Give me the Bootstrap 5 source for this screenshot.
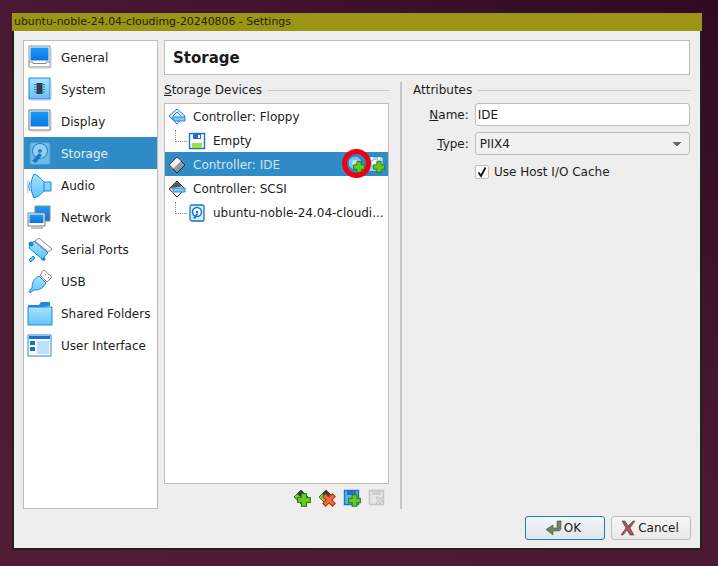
<!DOCTYPE html>
<html lang="en">
<head>
  <meta charset="UTF-8" />
  <meta name="viewport" content="width=device-width, initial-scale=1.0" />
  <title>Settings</title>
  <link href="https://cdn.jsdelivr.net/npm/bootstrap@5.3.3/dist/css/bootstrap.min.css" rel="stylesheet" />
  <style>
    html, body { height: 566px; overflow: hidden; }
    body {
      font-family: "DejaVu Sans", sans-serif;
      font-size: 12px;
      color: #1c1c1c;
      background: linear-gradient(215deg, #2e0a22 0%, #4a1832 45%, #531c36 100%);
      padding: 13px 16px 16px 12px;
    }
    .vb-window {
      height: 537px;
      background: #eeeeee;
      border: solid #20201e;
      border-width: 0 2px 2px 2px;
    }
    .vb-title {
      height: 18px;
      margin: 0 -2px;
      padding-left: 2px;
      line-height: 18px;
      font-size: 10.9px;
      background: #9c9414;
      color: #22220a;
      white-space: nowrap;
    }
    .vb-body { padding: 9px 10px 9px 9px; }
    .vb-side {
      width: 135px;
      height: 469px;
      background: #fff;
      border: 1px solid #bdbdbd;
    }
    .side-item { height: 32px; padding: 1px 0 0 3px; gap: 8px; }
    .side-item svg { width: 26px; height: 26px; flex: none; }
    .side-item.on { background: #308cc6; color: #e4f0f8; }
    .vb-main { width: 526px; }
    .vb-head {
      height: 35px;
      padding: 1px 0 0 8px;
      background: #fff;
      border: 1px solid #bdbdbd;
      font-size: 15px;
      font-weight: 700;
    }
    .vb-split { width: 2px; height: 427px; margin: 7px 11px 0 11px; background: #c6c6c6; }
    .vb-col-tree { width: 225px; }
    .vb-legend { height: 14px; margin-top: 8px; gap: 6px; }
    .vb-legend::after { content: ""; flex: 1; height: 1px; background: #c8c8c8; }
    .vb-tree {
      height: 381px;
      margin-top: 6px;
      background: #fff;
      border: 1px solid #bdbdbd;
    }
    .tree-row { height: 24px; padding: 1px 0 0 3px; gap: 7px; white-space: nowrap; }
    .tree-row svg { width: 18px; height: 18px; flex: none; }
    .tree-row.on { background: #308cc6; color: #cfe3f1; }
    .tree-hook {
      width: 12px;
      height: 12px;
      margin: -10px -6px 0 7px;
      border-left: 1px dotted #888;
      border-bottom: 1px dotted #888;
      flex: none;
    }
    .tree-adds { gap: 2px; margin: -1px 3px 0 0; }
    .tree-adds svg { width: 18px; height: 18px; }
    .ring-wrap { position: relative; }
    .ring-mark {
      position: absolute;
      left: -5px;
      top: -6px;
      width: 29px;
      height: 29px;
      border: 5px solid #ee0010;
      border-radius: 50%;
    }
    .tree-tools { gap: 7px; height: 25px; margin-top: 1px; padding-right: 3px; }
    .tree-tools svg { width: 18px; height: 18px; }
    .vb-col-attr { width: 277px; }
    .vb-col-attr .vb-legend { margin-right: -1px; }
    .attr-fields { margin-top: 6px; }
    .attr-label { width: 56px; margin-right: 6px; text-align: right; }
    .attr-row { height: 23px; }
    .attr-row + .attr-row { margin-top: 6px; }
    .attr-input, .attr-select {
      width: 216px;
      height: 23px;
      padding: 0 2px;
      font-size: 12px;
      color: #1c1c1c;
      border: 1px solid #bdbdbd;
      border-radius: 3px;
      box-shadow: none;
    }
    .attr-select {
      padding-left: 4px;
      background-color: #f1f1f1;
      background-image: linear-gradient(45deg, transparent 50%, #666 50%), linear-gradient(-45deg, transparent 50%, #666 50%);
      background-position: right 12px top 9px, right 7px top 9px;
      background-size: 5px 4px;
      background-repeat: no-repeat;
    }
    .attr-check { margin: 9px 0 0 62px; gap: 5px; height: 15px; }
    .attr-box {
      width: 14px;
      height: 14px;
      background: #fff;
      border: 1px solid #bdbdbd;
      border-radius: 2px;
    }
    .attr-box svg { display: block; width: 12px; height: 12px; }
    .vb-foot { gap: 6px; padding: 6px 0 0 0; margin-right: -1px; }
    .vb-btn {
      width: 80px;
      height: 24px;
      padding: 0 3px 0 0;
      gap: 2px;
      font-size: 12px;
      color: #1c1c1c;
      background: linear-gradient(#f6f6f6, #e9e9e9);
      border: 1px solid #bcbcbc;
      border-radius: 3px;
    }
    .vb-btn.main { background: linear-gradient(#f2f6f9, #dfe6ea); border-color: #2b7aa8; }
    .vb-btn svg { width: 16px; height: 16px; }
  </style>
</head>
<body>
  <svg width="0" height="0" class="d-block position-absolute">
    <defs>
      <linearGradient id="gBlue" x1="0" y1="0" x2="0" y2="1"><stop offset="0" stop-color="#1b9bf5"/><stop offset="1" stop-color="#0a74e6"/></linearGradient>
      <linearGradient id="gSky" x1="0" y1="0" x2="0" y2="1"><stop offset="0" stop-color="#a9e3ff"/><stop offset="1" stop-color="#62c3fa"/></linearGradient>
      <symbol id="plus" viewBox="0 0 10 10"><path d="M3.200 .5h3.600v2.700h2.700v3.600h-2.700v2.700h-3.600v-2.700h-2.700v-3.600h2.700z" fill="#64cb22" stroke="#2f7d10" stroke-width=".8"/></symbol>
      <symbol id="cross" viewBox="0 0 10 10"><path d="M2.500 .6 5 3l2.500-2.400 1.900 1.900L7 5l2.400 2.500-1.900 1.900L5 7 2.500 9.400.6 7.500 3 5 .6 2.500z" fill="#f0703a" stroke="#b83a12" stroke-width=".8"/></symbol>
    </defs>
  </svg>

  <div class="vb-window d-flex flex-column">
    <div class="vb-title">ubuntu-noble-24.04-cloudimg-20240806 - Settings</div>
    <div class="vb-body flex-grow-1 d-flex flex-column">
      <div class="d-flex gap-0 justify-content-between">
        <div class="vb-side">
          <div class="side-item d-flex align-items-center">
            <svg viewBox="0 0 26 26"><path d="M2 1h21v21H2z" fill="#fff" stroke="#8b8b8b"/><path d="M3.500 2.500h18v13h-18z" fill="url(#gBlue)"/><path d="M2 17h4v1.500h13V17h4" fill="none" stroke="#8b8b8b"/><path d="M3 23h21V4" fill="none" stroke="#c9c9c9"/></svg>
            General
          </div>
          <div class="side-item d-flex align-items-center">
            <svg viewBox="0 0 26 26"><path d="M2 1h21v21H2z" fill="url(#gSky)" stroke="#2a82dc"/><path d="M9.500 6h6v11h-6z" fill="#333d49"/><path d="M7 7.500h2M7 10h2M7 12.500h2M7 15h2M16 7.500h2M16 10h2M16 12.500h2M16 15h2" stroke="#3a78b0"/><path d="M3 23h21V4" fill="none" stroke="#c9c9c9"/></svg>
            System
          </div>
          <div class="side-item d-flex align-items-center">
            <svg viewBox="0 0 26 26"><path d="M2 1h21v20H2z" fill="#fff" stroke="#707070"/><path d="M3.500 2.500h18v15h-18z" fill="url(#gBlue)"/><path d="M3 22h21V4" fill="none" stroke="#c9c9c9"/></svg>
            Display
          </div>
          <div class="side-item on d-flex align-items-center">
            <svg viewBox="0 0 26 26"><rect x="3" y="1.500" width="20" height="22" rx="2" fill="#6db9e8" stroke="#4a9ad4"/><circle cx="13" cy="10" r="7.500" fill="#8fd0f2" stroke="#2f7fbe"/><circle cx="13" cy="10" r="2" fill="#2f7fbe"/><path d="M5 20l7-8 3 2-6 8z" fill="#2277bb"/></svg>
            Storage
          </div>
          <div class="side-item d-flex align-items-center">
            <svg viewBox="0 0 26 26"><path d="M7 1c4 1 7 5 10 8h7v9h-7c-3 3-6 6-10 7-2-4-3-8-3-12s1-8 3-12z" fill="url(#gSky)" stroke="#1f88e0"/><path d="M17 9v9" stroke="#1f88e0"/><path d="M3 9c-1.500 3-1.500 6 0 9" fill="none" stroke="#3b96df" stroke-width="1.200"/><path d="M1 7c-1 4-1 9 0 13" fill="none" stroke="#9cc9ee"/></svg>
            Audio
          </div>
          <div class="side-item d-flex align-items-center">
            <svg viewBox="0 0 26 26"><path d="M8 1h15v15H8z" fill="url(#gBlue)" stroke="#8b8b8b"/><path d="M1 8h17v13H1z" fill="#fff" stroke="#777"/><path d="M2.500 9.500h14v8.500h-14z" fill="url(#gBlue)"/><path d="M4 23h12" stroke="#aaa" stroke-width="1.500"/></svg>
            Network
          </div>
          <div class="side-item d-flex align-items-center">
            <svg viewBox="0 0 26 26"><path d="M12 1 25 12l-4 3L8 4z" fill="#fff" stroke="#8f8f8f"/><path d="M7 4 21 16l-6 6L2 11z" fill="url(#gSky)" stroke="#1f88e0"/><circle cx="4" cy="7" r="2.500" fill="#1f88e0"/><path d="M2 23l4-4 2 2-4 4z" fill="#62c3fa" stroke="#1f88e0"/><path d="M14 23l3-3 2 2-2 2z" fill="#1f88e0"/></svg>
            Serial Ports
          </div>
          <div class="side-item d-flex align-items-center">
            <svg viewBox="0 0 26 26"><path d="M17 1 25 8l-5 5-7-7z" fill="#fff" stroke="#8f8f8f"/><path d="M12 7l7 7-3 4c-3 3-6 3-9 3l-4 3-1-2 3-3c0-4 1-7 3-9z" fill="url(#gSky)" stroke="#1f88e0"/><path d="M18 5l1 1M21 8l1 1" stroke="#666"/></svg>
            USB
          </div>
          <div class="side-item d-flex align-items-center">
            <svg viewBox="0 0 26 26"><path d="M1 8V4h11l2-3h9v4z" fill="#1f88e0"/><path d="M1 6h24v18H1z" fill="url(#gSky)" stroke="#1f88e0"/></svg>
            Shared Folders
          </div>
          <div class="side-item d-flex align-items-center">
            <svg viewBox="0 0 26 26"><path d="M1 2h23v21H1z" fill="#fff" stroke="#1f88e0"/><path d="M2 3h21v3H2z" fill="#1a73c8"/><path d="M3 8h5v4H3zM3 14h5v4H3z" fill="#1a73c8"/><path d="M10 8h12v13H10z" fill="#b5e4fb"/></svg>
            User Interface
          </div>
        </div>

        <div class="vb-main d-flex flex-column">
          <div class="vb-head d-flex align-items-center">Storage</div>
          <div class="d-flex">
            <div class="vb-col-tree">
              <div class="vb-legend d-flex align-items-center"><span><u>S</u>torage Devices</span></div>
              <div class="vb-tree">
                <div class="tree-row d-flex align-items-center">
                  <svg viewBox="0 0 18 18"><path d="M9 1 17 8 9 16 1 8z" fill="#d8f0ff" stroke="#2a82dc"/><path d="M5 8 9 4l4 4" fill="none" stroke="#2a82dc"/><path d="M4 9h13v4H6z" fill="#7cc9f7" stroke="#2a82dc"/></svg>
                  Controller: Floppy
                </div>
                <div class="tree-row d-flex align-items-center">
                  <span class="tree-hook"></span>
                  <svg viewBox="0 0 18 18"><path d="M1.500 1.500h15v15h-15z" fill="#fff" stroke="#1a73c8" stroke-width="1.400"/><path d="M5 2h8v5H5z" fill="#1a73c8"/><path d="M10 3h2v3h-2z" fill="#fff"/><path d="M4 11h10v5H4z" fill="#9ce04a"/></svg>
                  Empty
                </div>
                <div class="tree-row on d-flex align-items-center">
                  <svg viewBox="0 0 18 18"><path d="M9 1 17 9 9 17 1 9z" fill="#8f979e" stroke="#2b2b2b"/><path d="M1.500 9 9 1.500 13 5 5 13z" fill="#f1f1f1"/><path d="M1.500 9 6 13.500" stroke="#d84a2a"/></svg>
                  <span class="flex-grow-1">Controller: IDE</span>
                  <span class="tree-adds d-flex">
                    <span class="ring-wrap d-block">
                      <svg viewBox="0 0 18 18" class="d-block"><circle cx="8" cy="8" r="7" fill="#7cc4ee" stroke="#1f6fb4"/><circle cx="8" cy="8" r="3" fill="#bfe6fa"/><use href="#plus" x="6" y="6" width="12" height="12"/></svg>
                      <span class="ring-mark"></span>
                    </span>
                    <svg viewBox="0 0 18 18" class="d-block"><path d="M2 3h13v12H2z" fill="#8ccdf2" stroke="#eef6fb"/><path d="M5 2v3M12 2v3" stroke="#fff" stroke-width="2"/><circle cx="8" cy="8" r="3" fill="#fff"/><use href="#plus" x="6" y="6" width="12" height="12"/></svg>
                  </span>
                </div>
                <div class="tree-row d-flex align-items-center">
                  <svg viewBox="0 0 18 18"><path d="M9 1 17 9 9 17 1 9z" fill="#fff" stroke="#2b2b2b"/><path d="M1.500 9 9 1.500 14 6.500 4 8z" fill="#50565c"/><path d="M4 8h13v4H6z" fill="#7cc9f7" stroke="#2a82dc"/><path d="M1.500 9 6 13.500" stroke="#d84a2a"/></svg>
                  Controller: SCSI
                </div>
                <div class="tree-row d-flex align-items-center">
                  <span class="tree-hook"></span>
                  <svg viewBox="0 0 18 18"><rect x="2" y="1" width="14" height="16" rx="2" fill="#d6efff" stroke="#1a73c8" stroke-width="1.300"/><circle cx="9" cy="8" r="4.500" fill="#fff" stroke="#1a73c8" stroke-width="1.500"/><circle cx="9" cy="8" r="1.200" fill="#1a73c8"/><path d="M5 14l4-5 1 1-3 5z" fill="#1a73c8"/></svg>
                  <span>ubuntu-noble-24.04-cloudi...</span>
                </div>
              </div>
              <div class="tree-tools d-flex align-items-center justify-content-end">
                <svg viewBox="0 0 18 18"><path d="M8 1 15 8 8 15 1 8z" fill="#7fc24e" stroke="#2f7d10"/><path d="M8 1l5 5-5 2-4-3z" fill="#3a3a3a"/><use href="#plus" x="4" y="4" width="14" height="14"/></svg>
                <svg viewBox="0 0 18 18"><path d="M8 1 15 8 8 15 1 8z" fill="#8fc25e" stroke="#2f7d10"/><path d="M8 1l5 5-5 2-4-3z" fill="#3a3a3a"/><use href="#cross" x="4" y="4" width="14" height="14"/></svg>
                <svg viewBox="0 0 18 18"><path d="M1.500 1.500h14v14h-14z" fill="#5cb4f2" stroke="#1a73c8" stroke-width="1.400"/><path d="M4 2h9v4H4z" fill="#1a73c8"/><use href="#plus" x="5" y="5" width="13" height="13"/></svg>
                <svg viewBox="0 0 18 18"><path d="M1.500 1.500h14v14h-14z" fill="#e6e6e6" stroke="#c4c4c4" stroke-width="1.400"/><path d="M4 2h9v4H4z" fill="#cfcfcf"/><path d="M8 8h3l1 2 2-2 2 2-2 2 2 2-2 2-2-2-2 2-2-2 2-2z" fill="#dadada" stroke="#bdbdbd" stroke-width=".7"/></svg>
              </div>
            </div>
            <div class="vb-split"></div>
            <div class="vb-col-attr">
              <div class="vb-legend d-flex align-items-center"><span>Attributes</span></div>
              <div class="attr-fields">
                <div class="attr-row d-flex align-items-center">
                  <label class="attr-label"><u>N</u>ame:</label>
                  <input class="form-control attr-input" value="IDE" />
                </div>
                <div class="attr-row d-flex align-items-center">
                  <label class="attr-label"><u>T</u>ype:</label>
                  <select class="form-select attr-select"><option>PIIX4</option></select>
                </div>
                <div class="attr-check d-flex align-items-center">
                  <span class="attr-box d-block"><svg viewBox="0 0 12 12"><path d="M2.500 6.500 5 10 9.500 1.500" fill="none" stroke="#111" stroke-width="1.800"/></svg></span>
                  <span>Use Host I/O Cache</span>
                </div>
              </div>
            </div>
          </div>
        </div>
      </div>

      <div class="vb-foot d-flex justify-content-end">
        <button class="btn vb-btn main d-flex align-items-center justify-content-center">
          <svg viewBox="0 0 16 16"><path d="M15 1v7c0 2-1 3-3 3H7v4L0 9.500 7 5v3h4V1z" fill="#6f8263" stroke="#4a5a42" stroke-width=".6"/></svg>
          OK
        </button>
        <button class="btn vb-btn d-flex align-items-center justify-content-center">
          <svg viewBox="0 0 16 16"><path d="M2 1h3l3 5 5-5h2l-5 7 4 7h-4l-3-5-4 5H1l5-7z" fill="#a5535f" stroke="#6f3038" stroke-width=".6"/></svg>
          Cancel
        </button>
      </div>
    </div>
  </div>
</body>
</html>
